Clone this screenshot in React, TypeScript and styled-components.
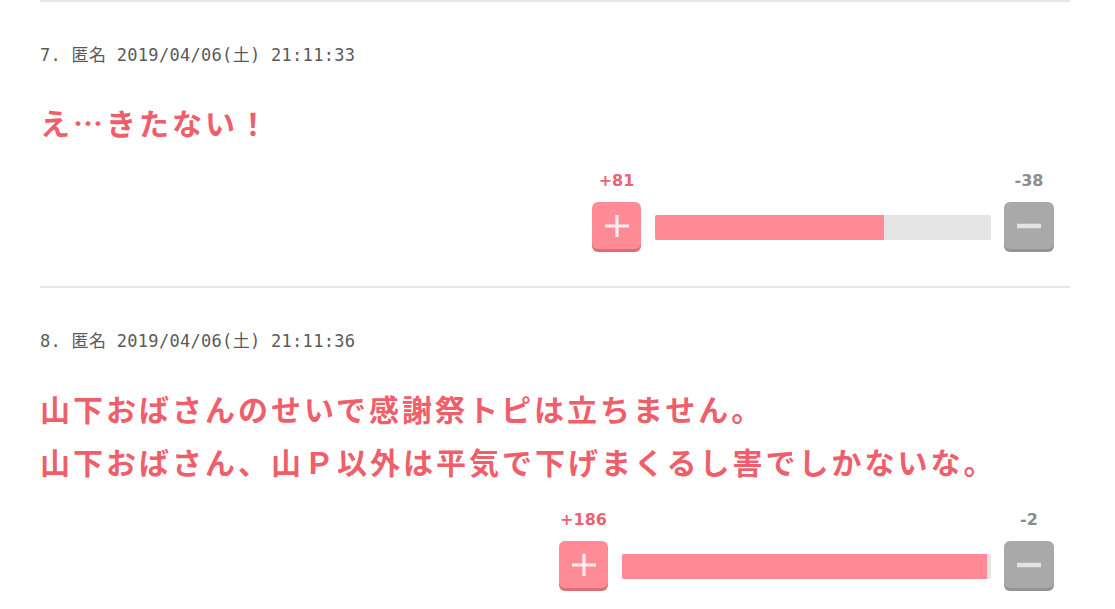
import React from "react";
import styled, { createGlobalStyle } from "styled-components";

const GlobalStyle = createGlobalStyle`
  html, body {
    margin: 0;
    padding: 0;
    background: #ffffff;
  }
  body {
    font-family: "Noto Sans CJK JP", "Noto Sans", sans-serif;
  }
`;

const Page = styled.div`
  width: 1030px;
  margin-left: 40px;
  display: flex;
  flex-direction: column;
`;

const Post = styled.article`
  border-top: 2px solid #e6e6e6;
  padding: 43px 0 34px;
  display: flex;
  flex-direction: column;
`;

const Meta = styled.div`
  font-family: "DejaVu Sans Mono", "Noto Sans CJK JP", monospace;
  font-size: 17px;
  line-height: 20px;
  color: #5a5a5a;
  letter-spacing: 0.3px;
`;

const Body = styled.p`
  margin: 31px 0 0;
  font-family: "Noto Sans CJK JP", sans-serif;
  font-weight: 700;
  font-size: 30px;
  letter-spacing: 3px;
  line-height: 53px;
  color: #ef5f6b;
`;

const Vote = styled.div<{ $width: number }>`
  margin: 22px 16px 0 auto;
  width: ${(p) => p.$width}px;
  display: grid;
  grid-template-columns: 49px 1fr 50px;
  grid-template-rows: 20px 50px;
  row-gap: 11px;
`;

const Count = styled.span<{ $tone: "plus" | "minus" }>`
  font-family: "DejaVu Sans", sans-serif;
  font-weight: 700;
  font-size: 16px;
  line-height: 20px;
  text-align: center;
  white-space: nowrap;
  justify-self: center;
  color: ${(p) => (p.$tone === "plus" ? "#ec6470" : "#8c8c8c")};
`;

const VoteButton = styled.button<{ $tone: "plus" | "minus" }>`
  align-self: start;
  width: 100%;
  height: 47px;
  padding: 0;
  border: none;
  border-radius: 6px;
  display: flex;
  align-items: center;
  justify-content: center;
  cursor: pointer;
  background: ${(p) => (p.$tone === "plus" ? "#ff8b97" : "#a9a9a9")};
  box-shadow: 0 3px 0 ${(p) => (p.$tone === "plus" ? "#e06c78" : "#939393")};
`;

const Track = styled.div`
  align-self: center;
  margin: 0 13px 0 14px;
  height: 25px;
  border-radius: 2px;
  background: #e4e4e4;
  overflow: hidden;
  display: flex;
`;

const Fill = styled.div`
  height: 100%;
  background: #ff8a96;
`;

const PlusIcon = () => (
  <svg width="26" height="24" viewBox="0 0 26 24">
    <path d="M13 1v22M1 12h24" stroke="rgba(255,255,255,0.82)" strokeWidth="3.2" />
  </svg>
);

const MinusIcon = () => (
  <svg width="26" height="24" viewBox="0 0 26 24">
    <path d="M1 12h24" stroke="#e2e2e2" strokeWidth="4.5" />
  </svg>
);

type PostData = {
  no: number;
  date: string;
  lines: string[];
  plus: number;
  minus: number;
  width: number;
};

const posts: PostData[] = [
  {
    no: 7,
    date: "2019/04/06(土) 21:11:33",
    lines: ["え…きたない！"],
    plus: 81,
    minus: 38,
    width: 462,
  },
  {
    no: 8,
    date: "2019/04/06(土) 21:11:36",
    lines: [
      "山下おばさんのせいで感謝祭トピは立ちません。",
      "山下おばさん、山Ｐ以外は平気で下げまくるし害でしかないな。",
    ],
    plus: 186,
    minus: 2,
    width: 495,
  },
];

export default function App() {
  return (
    <>
      <GlobalStyle />
      <Page>
        {posts.map((p) => (
          <Post key={p.no}>
            <Meta>
              {p.no}. 匿名 {p.date}
            </Meta>
            <Body>
              {p.lines.map((l, i) => (
                <React.Fragment key={i}>
                  {i > 0 && <br />}
                  {l}
                </React.Fragment>
              ))}
            </Body>
            <Vote $width={p.width}>
              <Count $tone="plus">+{p.plus}</Count>
              <span />
              <Count $tone="minus">-{p.minus}</Count>
              <VoteButton $tone="plus" aria-label="plus">
                <PlusIcon />
              </VoteButton>
              <Track>
                <Fill style={{ width: `${(p.plus / (p.plus + p.minus)) * 100}%` }} />
              </Track>
              <VoteButton $tone="minus" aria-label="minus">
                <MinusIcon />
              </VoteButton>
            </Vote>
          </Post>
        ))}
      </Page>
    </>
  );
}
